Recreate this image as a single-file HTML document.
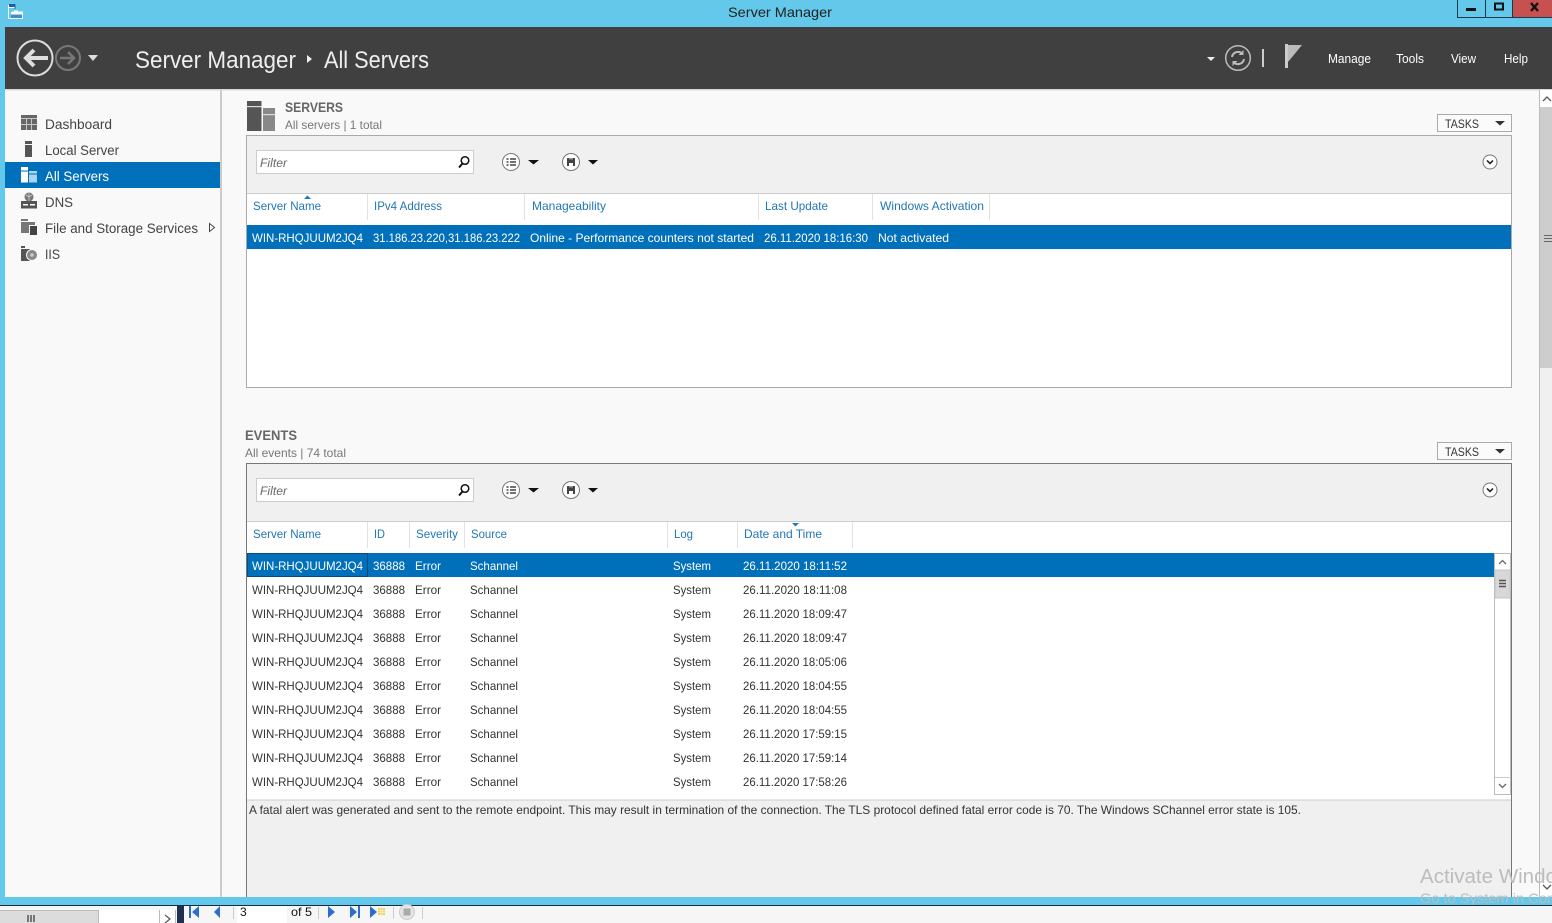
<!DOCTYPE html>
<html><head><meta charset="utf-8"><title>Server Manager</title>
<style>
html,body{margin:0;padding:0;width:1552px;height:923px;overflow:hidden;background:#fff}
svg{display:block}
text{font-family:"Liberation Sans",sans-serif;font-size:12px;fill:#333}
.h{fill:#2277b5}
.w{fill:#fff}
.n{font-size:13.5px;fill:#444}
.m{font-size:12.5px;fill:#fff}
.b{font-size:24px;fill:#eee}
</style></head><body>
<svg width="1552" height="923" viewBox="0 0 1552 923" xmlns="http://www.w3.org/2000/svg">
<!-- frame -->
<rect width="1552" height="923" fill="#f9f9f9"/>
<rect width="1552" height="27" fill="#63c8ea"/>
<rect x="0" y="0" width="5" height="905" fill="#63c8ea"/>
<rect x="0" y="897" width="1552" height="8" fill="#63c8ea"/>
<rect x="0" y="905" width="1552" height="1" fill="#1a2a3a"/>
<text x="728" y="17" textLength="104" lengthAdjust="spacingAndGlyphs" style="font-size:14px;fill:#222">Server Manager</text>
<!-- app icon -->
<rect x="8" y="4" width="7" height="3" fill="#1c5fa8"/>
<path d="M8 7.500h7M8.500 4v14.500H22.500V12H12" fill="none" stroke="#fff" stroke-width="1"/>
<path d="M8.500 4.500h6.500V9" fill="none" stroke="#1c5fa8" stroke-width="1"/>
<path d="M14 10.500h4v1.500h-4z" fill="#fff"/>
<rect x="11" y="12" width="11" height="2.500" fill="#fff"/>
<rect x="11" y="14.500" width="11" height="3.500" fill="#3d8fd0"/>
<!-- window buttons -->
<rect x="1512" y="0" width="40" height="17" fill="#c75050"/>
<path d="M1457.500 0V17.500H1552M1485.500 0V17M1512.500 0V17" fill="none" stroke="#1a3a4a"/>
<rect x="1466" y="8" width="10" height="3" fill="#111"/>
<rect x="1495" y="3.500" width="8" height="6" fill="none" stroke="#111" stroke-width="2"/>
<path d="M1531 3l7 8M1538 3l-7 8" stroke="#111" stroke-width="2.400"/>
<!-- dark header -->
<rect x="5" y="27" width="1547" height="62" fill="#404040"/>
<rect x="5" y="89" width="1547" height="1.500" fill="#d8d8d8"/>
<circle cx="35" cy="58" r="17.500" fill="none" stroke="#ddd" stroke-width="2"/>
<path d="M48 58H27M34 50l-8 8 8 8" fill="none" stroke="#ddd" stroke-width="4"/>
<circle cx="68" cy="58" r="12" fill="none" stroke="#777" stroke-width="2"/>
<path d="M60 58H74M68 52l6 6-6 6" fill="none" stroke="#777" stroke-width="2.500"/>
<path d="M88 55h10l-5 6z" fill="#ddd"/>
<text class="b" x="135" y="68" textLength="161" lengthAdjust="spacingAndGlyphs">Server Manager</text>
<path d="M307 55l5 4-5 4z" fill="#eee"/>
<text class="b" x="324" y="68" textLength="105" lengthAdjust="spacingAndGlyphs">All Servers</text>
<path d="M1207 57h8l-4 4z" fill="#eee"/>
<circle cx="1238" cy="58" r="12.300" fill="none" stroke="#bbb" stroke-width="1.500"/>
<path d="M1232 57a6 6 0 0 1 10.500-3M1244 59a6 6 0 0 1-10.500 3" fill="none" stroke="#bbb" stroke-width="2"/>
<path d="M1243.500 50v5h-5zM1232.500 66v-5h5z" fill="#bbb"/>
<rect x="1262" y="49" width="2" height="18" fill="#ccc"/>
<rect x="1285" y="44" width="3" height="24" fill="#ccc"/>
<path d="M1288 45h14l-14 17z" fill="#bbb"/>
<text class="m" x="1328" y="63" textLength="43" lengthAdjust="spacingAndGlyphs">Manage</text>
<text class="m" x="1396" y="63" textLength="28" lengthAdjust="spacingAndGlyphs">Tools</text>
<text class="m" x="1451" y="63" textLength="25" lengthAdjust="spacingAndGlyphs">View</text>
<text class="m" x="1504" y="63" textLength="24" lengthAdjust="spacingAndGlyphs">Help</text>
<!-- sidebar -->
<rect x="220" y="90" width="2" height="807" fill="#ccc"/>
<rect x="5" y="162" width="215" height="26" fill="#0070bb"/>
<!-- dashboard icon -->
<rect x="21" y="115" width="16" height="15" fill="#666"/>
<path d="M21 118.500h16M26.500 119v11M31.500 119v11M21 124.500h16" stroke="#c8c8c8" stroke-width="1"/>
<!-- local server icon -->
<rect x="25" y="141" width="7" height="3" fill="#555"/><rect x="25" y="145" width="7" height="12" fill="#555"/>
<!-- all servers icon -->
<rect x="21" y="167" width="7" height="3.500" fill="#fff"/><rect x="21" y="171.500" width="7" height="11" fill="#fff"/>
<rect x="29" y="171" width="8" height="2.500" fill="#a9d3ee"/><rect x="29" y="174.500" width="8" height="8" fill="#a9d3ee"/>
<!-- dns icon -->
<circle cx="29" cy="197" r="4.500" fill="#777"/>
<path d="M26 195l3 2 3-2M29 193v8" stroke="#ccc" stroke-width="0.800" fill="none"/>
<rect x="21" y="201" width="16" height="7.500" fill="#555"/>
<rect x="23" y="204" width="5" height="1.500" fill="#fff"/><rect x="30" y="204" width="5" height="1.500" fill="#fff"/>
<!-- file storage icon -->
<path d="M21 219h7v2h-7zM21 222h14v11H21z" fill="#777"/>
<rect x="29.500" y="225.500" width="8" height="10" fill="#444" stroke="#f9f9f9" stroke-width="1"/>
<!-- iis icon -->
<path d="M21 246h4v2h-4zM21 249h9v12h-9z" fill="#555"/>
<circle cx="32" cy="255" r="5.500" fill="#888" stroke="#f9f9f9"/>
<circle cx="32" cy="255" r="1.800" fill="#ccc"/>
<text class="n" x="45" y="129" textLength="67" lengthAdjust="spacingAndGlyphs">Dashboard</text>
<text class="n" x="45" y="155" textLength="74" lengthAdjust="spacingAndGlyphs">Local Server</text>
<text class="n" x="45" y="181" textLength="64" lengthAdjust="spacingAndGlyphs" style="fill:#fff">All Servers</text>
<text class="n" x="45" y="207" textLength="28" lengthAdjust="spacingAndGlyphs">DNS</text>
<text class="n" x="45" y="233" textLength="153" lengthAdjust="spacingAndGlyphs">File and Storage Services</text>
<text class="n" x="45" y="259" textLength="15" lengthAdjust="spacingAndGlyphs">IIS</text>
<path d="M209.500 223.500v8l5-4z" fill="#fff" stroke="#444"/>
<!-- page scrollbar -->
<rect x="1539" y="90" width="13" height="807" fill="#f0f0f0"/>
<rect x="1539" y="90" width="1" height="807" fill="#bbb"/>
<rect x="1540" y="90" width="12" height="17" fill="#fff"/>
<path d="M1543 101l4-4 4 4" fill="none" stroke="#555" stroke-width="1.300"/>
<rect x="1540" y="107" width="12" height="261" fill="#cdcdcd"/>
<path d="M1544 235.500h8M1544 238.500h8M1544 241.500h8" stroke="#666"/>
<rect x="1540" y="880" width="12" height="17" fill="#fff"/>
<path d="M1543 885l4 4 4-4" fill="none" stroke="#555" stroke-width="1.300"/>
<!-- SERVERS heading -->
<rect x="247" y="101" width="14.500" height="30" fill="#555"/>
<rect x="247" y="106" width="14.500" height="1.200" fill="#ddd"/>
<rect x="263" y="108" width="12" height="23" fill="#888"/>
<rect x="263" y="114" width="12" height="1.200" fill="#ddd"/>
<text x="285" y="112" textLength="58" lengthAdjust="spacingAndGlyphs" style="font-size:14px;font-weight:bold;fill:#666">SERVERS</text>
<text x="285" y="129" textLength="97" lengthAdjust="spacingAndGlyphs" style="fill:#777">All servers | 1 total</text>
<rect x="1437.500" y="114.500" width="74" height="17" fill="#fbfbfb" stroke="#aaa"/>
<text x="1445" y="128" textLength="34" lengthAdjust="spacingAndGlyphs">TASKS</text>
<path d="M1495 121h10l-5 4.500z" fill="#333"/>
<!-- SERVERS panel -->
<rect x="246.500" y="135.500" width="1265" height="252" fill="#fff" stroke="#aaa"/>
<rect x="247" y="136" width="1264" height="57" fill="#f0f0f0"/>
<rect x="247" y="193" width="1264" height="1" fill="#ccc"/>
<rect x="256.500" y="150.500" width="217" height="23" fill="#fff" stroke="#ccc"/>
<text x="260" y="167" textLength="27" lengthAdjust="spacingAndGlyphs" style="font-style:italic;fill:#666">Filter</text>
<circle cx="465" cy="160.500" r="3.800" fill="none" stroke="#111" stroke-width="1.500"/><path d="M462.500 163.500l-3.500 4" stroke="#111" stroke-width="2"/>
<circle cx="511" cy="162" r="8.500" fill="#fff" stroke="#777"/>
<path d="M506.500 159h2M506.500 162h2M506.500 165h2M510 159h6M510 162h6M510 165h6" stroke="#444" stroke-width="1.500"/>
<path d="M528 160h11l-5.500 4.500z" fill="#111"/>
<circle cx="571" cy="162" r="8.500" fill="#fff" stroke="#777"/>
<path d="M567 158h8v8h-8z" fill="#444"/><rect x="569" y="158" width="4" height="1.500" fill="#999"/><rect x="569" y="163" width="4" height="3" fill="#fff"/>
<path d="M588 160h10l-5 4.500z" fill="#111"/>
<circle cx="1490" cy="162" r="7" fill="#fff" stroke="#777"/>
<path d="M1487 160.500l3 3 3-3" fill="none" stroke="#111" stroke-width="1.500"/>
<path d="M304 199l3.500-3.500 3.500 3.500z" fill="#2277b5"/>
<path d="M367.500 194v26M524.500 194v26M758.500 194v26M872.500 194v26M989.500 194v26" stroke="#e2e2e2"/>
<text class="h" x="253" y="210" textLength="68" lengthAdjust="spacingAndGlyphs">Server Name</text>
<text class="h" x="374" y="210" textLength="68" lengthAdjust="spacingAndGlyphs">IPv4 Address</text>
<text class="h" x="532" y="210" textLength="74" lengthAdjust="spacingAndGlyphs">Manageability</text>
<text class="h" x="765" y="210" textLength="63" lengthAdjust="spacingAndGlyphs">Last Update</text>
<text class="h" x="880" y="210" textLength="104" lengthAdjust="spacingAndGlyphs">Windows Activation</text>
<rect x="247" y="225" width="1264" height="24" fill="#0070bb"/>
<text class="w" x="252" y="242" textLength="111" lengthAdjust="spacingAndGlyphs">WIN-RHQJUUM2JQ4</text>
<text class="w" x="373" y="242" textLength="147" lengthAdjust="spacingAndGlyphs">31.186.23.220,31.186.23.222</text>
<text class="w" x="530" y="242" textLength="224" lengthAdjust="spacingAndGlyphs">Online - Performance counters not started</text>
<text class="w" x="764" y="242" textLength="104" lengthAdjust="spacingAndGlyphs">26.11.2020 18:16:30</text>
<text class="w" x="878" y="242" textLength="71" lengthAdjust="spacingAndGlyphs">Not activated</text>
<!-- EVENTS heading -->
<text x="245" y="440" textLength="52" lengthAdjust="spacingAndGlyphs" style="font-size:14px;font-weight:bold;fill:#666">EVENTS</text>
<text x="245" y="457" textLength="101" lengthAdjust="spacingAndGlyphs" style="fill:#777">All events | 74 total</text>
<rect x="1437.500" y="442.500" width="74" height="17" fill="#fbfbfb" stroke="#aaa"/>
<text x="1445" y="456" textLength="34" lengthAdjust="spacingAndGlyphs">TASKS</text>
<path d="M1495 449h10l-5 4.500z" fill="#333"/>
<!-- EVENTS panel -->
<rect x="246" y="463" width="1266" height="434" fill="#f0f0f0"/>
<path d="M246.500 897V463.500H1511.500V897" fill="none" stroke="#777"/>
<rect x="247" y="521" width="1264" height="279" fill="#fff"/>
<rect x="247" y="521" width="1264" height="1" fill="#ccc"/>
<rect x="247" y="799.500" width="1264" height="1" fill="#ccc"/>
<rect x="256.500" y="478.500" width="217" height="23" fill="#fff" stroke="#ccc"/>
<text x="260" y="495" textLength="27" lengthAdjust="spacingAndGlyphs" style="font-style:italic;fill:#666">Filter</text>
<circle cx="465" cy="488.500" r="3.800" fill="none" stroke="#111" stroke-width="1.500"/><path d="M462.500 491.500l-3.500 4" stroke="#111" stroke-width="2"/>
<circle cx="511" cy="490" r="8.500" fill="#fff" stroke="#777"/>
<path d="M506.500 487h2M506.500 490h2M506.500 493h2M510 487h6M510 490h6M510 493h6" stroke="#444" stroke-width="1.500"/>
<path d="M528 488h11l-5.500 4.500z" fill="#111"/>
<circle cx="571" cy="490" r="8.500" fill="#fff" stroke="#777"/>
<path d="M567 486h8v8h-8z" fill="#444"/><rect x="569" y="486" width="4" height="1.500" fill="#999"/><rect x="569" y="491" width="4" height="3" fill="#fff"/>
<path d="M588 488h10l-5 4.500z" fill="#111"/>
<circle cx="1490" cy="490" r="7" fill="#fff" stroke="#777"/>
<path d="M1487 488.500l3 3 3-3" fill="none" stroke="#111" stroke-width="1.500"/>
<path d="M792 523h7l-3.500 3.500z" fill="#2277b5"/>
<path d="M367.500 522v26M409.500 522v26M464.500 522v26M667.500 522v26M737.500 522v26M852.500 522v26" stroke="#e2e2e2"/>
<text class="h" x="253" y="538" textLength="68" lengthAdjust="spacingAndGlyphs">Server Name</text>
<text class="h" x="374" y="538" textLength="11" lengthAdjust="spacingAndGlyphs">ID</text>
<text class="h" x="416" y="538" textLength="42" lengthAdjust="spacingAndGlyphs">Severity</text>
<text class="h" x="471" y="538" textLength="36" lengthAdjust="spacingAndGlyphs">Source</text>
<text class="h" x="674" y="538" textLength="19" lengthAdjust="spacingAndGlyphs">Log</text>
<text class="h" x="744" y="538" textLength="78" lengthAdjust="spacingAndGlyphs">Date and Time</text>
<rect x="247" y="553" width="1247" height="24" fill="#0070bb"/>
<rect x="247.500" y="553.500" width="120" height="23" fill="none" stroke="#0a2a44" stroke-dasharray="1 1"/>
<!-- rows -->
<text class="w" x="252" y="570" textLength="111" lengthAdjust="spacingAndGlyphs">WIN-RHQJUUM2JQ4</text><text class="w" x="373" y="570" textLength="32" lengthAdjust="spacingAndGlyphs">36888</text><text class="w" x="415" y="570" textLength="26" lengthAdjust="spacingAndGlyphs">Error</text><text class="w" x="470" y="570" textLength="48" lengthAdjust="spacingAndGlyphs">Schannel</text><text class="w" x="673" y="570" textLength="38" lengthAdjust="spacingAndGlyphs">System</text><text class="w" x="743" y="570" textLength="104" lengthAdjust="spacingAndGlyphs">26.11.2020 18:11:52</text>
<text x="252" y="594" textLength="111" lengthAdjust="spacingAndGlyphs">WIN-RHQJUUM2JQ4</text><text x="373" y="594" textLength="32" lengthAdjust="spacingAndGlyphs">36888</text><text x="415" y="594" textLength="26" lengthAdjust="spacingAndGlyphs">Error</text><text x="470" y="594" textLength="48" lengthAdjust="spacingAndGlyphs">Schannel</text><text x="673" y="594" textLength="38" lengthAdjust="spacingAndGlyphs">System</text><text x="743" y="594" textLength="104" lengthAdjust="spacingAndGlyphs">26.11.2020 18:11:08</text>
<text x="252" y="618" textLength="111" lengthAdjust="spacingAndGlyphs">WIN-RHQJUUM2JQ4</text><text x="373" y="618" textLength="32" lengthAdjust="spacingAndGlyphs">36888</text><text x="415" y="618" textLength="26" lengthAdjust="spacingAndGlyphs">Error</text><text x="470" y="618" textLength="48" lengthAdjust="spacingAndGlyphs">Schannel</text><text x="673" y="618" textLength="38" lengthAdjust="spacingAndGlyphs">System</text><text x="743" y="618" textLength="104" lengthAdjust="spacingAndGlyphs">26.11.2020 18:09:47</text>
<text x="252" y="642" textLength="111" lengthAdjust="spacingAndGlyphs">WIN-RHQJUUM2JQ4</text><text x="373" y="642" textLength="32" lengthAdjust="spacingAndGlyphs">36888</text><text x="415" y="642" textLength="26" lengthAdjust="spacingAndGlyphs">Error</text><text x="470" y="642" textLength="48" lengthAdjust="spacingAndGlyphs">Schannel</text><text x="673" y="642" textLength="38" lengthAdjust="spacingAndGlyphs">System</text><text x="743" y="642" textLength="104" lengthAdjust="spacingAndGlyphs">26.11.2020 18:09:47</text>
<text x="252" y="666" textLength="111" lengthAdjust="spacingAndGlyphs">WIN-RHQJUUM2JQ4</text><text x="373" y="666" textLength="32" lengthAdjust="spacingAndGlyphs">36888</text><text x="415" y="666" textLength="26" lengthAdjust="spacingAndGlyphs">Error</text><text x="470" y="666" textLength="48" lengthAdjust="spacingAndGlyphs">Schannel</text><text x="673" y="666" textLength="38" lengthAdjust="spacingAndGlyphs">System</text><text x="743" y="666" textLength="104" lengthAdjust="spacingAndGlyphs">26.11.2020 18:05:06</text>
<text x="252" y="690" textLength="111" lengthAdjust="spacingAndGlyphs">WIN-RHQJUUM2JQ4</text><text x="373" y="690" textLength="32" lengthAdjust="spacingAndGlyphs">36888</text><text x="415" y="690" textLength="26" lengthAdjust="spacingAndGlyphs">Error</text><text x="470" y="690" textLength="48" lengthAdjust="spacingAndGlyphs">Schannel</text><text x="673" y="690" textLength="38" lengthAdjust="spacingAndGlyphs">System</text><text x="743" y="690" textLength="104" lengthAdjust="spacingAndGlyphs">26.11.2020 18:04:55</text>
<text x="252" y="714" textLength="111" lengthAdjust="spacingAndGlyphs">WIN-RHQJUUM2JQ4</text><text x="373" y="714" textLength="32" lengthAdjust="spacingAndGlyphs">36888</text><text x="415" y="714" textLength="26" lengthAdjust="spacingAndGlyphs">Error</text><text x="470" y="714" textLength="48" lengthAdjust="spacingAndGlyphs">Schannel</text><text x="673" y="714" textLength="38" lengthAdjust="spacingAndGlyphs">System</text><text x="743" y="714" textLength="104" lengthAdjust="spacingAndGlyphs">26.11.2020 18:04:55</text>
<text x="252" y="738" textLength="111" lengthAdjust="spacingAndGlyphs">WIN-RHQJUUM2JQ4</text><text x="373" y="738" textLength="32" lengthAdjust="spacingAndGlyphs">36888</text><text x="415" y="738" textLength="26" lengthAdjust="spacingAndGlyphs">Error</text><text x="470" y="738" textLength="48" lengthAdjust="spacingAndGlyphs">Schannel</text><text x="673" y="738" textLength="38" lengthAdjust="spacingAndGlyphs">System</text><text x="743" y="738" textLength="104" lengthAdjust="spacingAndGlyphs">26.11.2020 17:59:15</text>
<text x="252" y="762" textLength="111" lengthAdjust="spacingAndGlyphs">WIN-RHQJUUM2JQ4</text><text x="373" y="762" textLength="32" lengthAdjust="spacingAndGlyphs">36888</text><text x="415" y="762" textLength="26" lengthAdjust="spacingAndGlyphs">Error</text><text x="470" y="762" textLength="48" lengthAdjust="spacingAndGlyphs">Schannel</text><text x="673" y="762" textLength="38" lengthAdjust="spacingAndGlyphs">System</text><text x="743" y="762" textLength="104" lengthAdjust="spacingAndGlyphs">26.11.2020 17:59:14</text>
<text x="252" y="786" textLength="111" lengthAdjust="spacingAndGlyphs">WIN-RHQJUUM2JQ4</text><text x="373" y="786" textLength="32" lengthAdjust="spacingAndGlyphs">36888</text><text x="415" y="786" textLength="26" lengthAdjust="spacingAndGlyphs">Error</text><text x="470" y="786" textLength="48" lengthAdjust="spacingAndGlyphs">Schannel</text><text x="673" y="786" textLength="38" lengthAdjust="spacingAndGlyphs">System</text><text x="743" y="786" textLength="104" lengthAdjust="spacingAndGlyphs">26.11.2020 17:58:26</text>
<!-- inner scrollbar -->
<rect x="1494.500" y="553.500" width="16" height="241" fill="#fff" stroke="#bbb"/>
<rect x="1495" y="570" width="15" height="28" fill="#d8d8d8" stroke="#c4c4c4"/>
<path d="M1499 580.500h7M1499 583.500h7M1499 586.500h7" stroke="#555" stroke-width="1.500"/>
<path d="M1499 564l3.500-3.500 3.500 3.500" fill="none" stroke="#666" stroke-width="1.300"/>
<path d="M1495 777.500h15" stroke="#ccc"/>
<path d="M1499 784l3.500 3.500 3.500-3.500" fill="none" stroke="#666" stroke-width="1.300"/>
<text x="249" y="814" textLength="1052" lengthAdjust="spacingAndGlyphs">A fatal alert was generated and sent to the remote endpoint. This may result in termination of the connection. The TLS protocol defined fatal error code is 70. The Windows SChannel error state is 105.</text>
<!-- blue strip redraw over panels -->
<rect x="0" y="897" width="1552" height="8" fill="#63c8ea"/>
<!-- watermark -->
<text x="1420" y="883" textLength="162" lengthAdjust="spacingAndGlyphs" style="font-size:20px;fill:#bcbcbc">Activate Windows</text>
<text x="1420" y="903" textLength="335" lengthAdjust="spacingAndGlyphs" style="font-size:14px;fill:#bcbcbc">Go to System in Control Panel to activate Windows.</text>
<!-- bottom strip -->
<rect x="0" y="905" width="1552" height="1" fill="#1a2a3a"/>
<rect x="0" y="906" width="1552" height="17" fill="#f6f6f6"/>
<rect x="0" y="910" width="98" height="13" fill="#dcdcdc"/>
<rect x="0" y="910" width="176" height="1" fill="#bbb"/>
<path d="M28 915v7M31 915v7M34 915v7" stroke="#555" stroke-width="1.500"/>
<rect x="98" y="910" width="78" height="13" fill="#fff"/>
<path d="M98.500 910v13M159.500 910v13M175.500 910v13" stroke="#bbb"/>
<path d="M165 915l5 4-5 4" fill="none" stroke="#555" stroke-width="1.200"/>
<rect x="177" y="906" width="7" height="17" fill="#1f2f52"/>
<rect x="237" y="906" width="50" height="17" fill="#fff"/>
<path d="M233.500 907v12M318.500 907v12M393.500 907v12M422.500 907v12" stroke="#ccc"/>
<rect x="189" y="906" width="2" height="12" fill="#2a6fd0"/>
<path d="M199 906v12l-7-6z" fill="#2a6fd0"/>
<path d="M220 906v12l-6-6z" fill="#2a6fd0"/>
<text x="240" y="916" style="font-size:12px;fill:#111">3</text>
<text x="291" y="916" textLength="21" lengthAdjust="spacingAndGlyphs" style="font-size:12px;fill:#111">of 5</text>
<path d="M328 906v12l7-6z" fill="#2a6fd0"/>
<path d="M350 906v12l7-6z" fill="#2a6fd0"/><rect x="358" y="906" width="2" height="12" fill="#2a6fd0"/>
<path d="M370 906v12l7-6z" fill="#2a6fd0"/>
<path d="M378 908h7v7h-7z" fill="#f0d060"/>
<path d="M380.500 908v7M382.500 908v7M378 910.500h7M378 912.500h7" stroke="#fbf3c8" stroke-width="0.700"/>
<circle cx="407" cy="912" r="7.500" fill="#e4e4e4" stroke="#ccc"/>
<rect x="403.500" y="908.500" width="7" height="7" fill="#aaa"/>
</svg>
</body></html>
